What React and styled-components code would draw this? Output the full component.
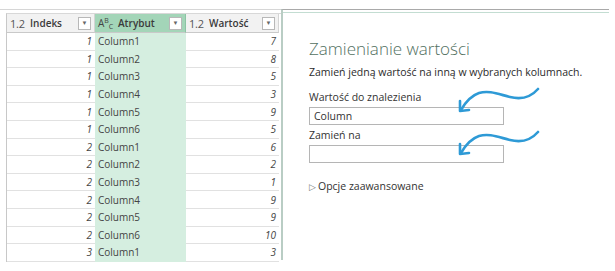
import React from 'react'
import styled, { createGlobalStyle } from 'styled-components'

const GlobalStyle = createGlobalStyle`
  html, body { margin: 0; padding: 0; background: #fff; }
  body { font-family: "Open Sans", "Noto Sans", sans-serif; }
`

const rows = [
  [1, 'Column1', 7], [1, 'Column2', 8], [1, 'Column3', 5], [1, 'Column4', 3],
  [1, 'Column5', 9], [1, 'Column6', 5], [2, 'Column1', 6], [2, 'Column2', 2],
  [2, 'Column3', 1], [2, 'Column4', 9], [2, 'Column5', 9], [2, 'Column6', 10],
  [3, 'Column1', 3],
]

const Page = styled.div`
  position: relative;
  width: 615px;
  height: 271px;
  overflow: hidden;
  display: flex;
  padding-top: 9px;
  box-sizing: border-box;
`

const TableArea = styled.div`
  width: 281px;
  flex: none;
  border-top: 1px solid #d6d6d6;
  padding-top: 3px;
  padding-left: 6px;
  box-sizing: border-box;
`

const Grid = styled.div`
  display: grid;
  grid-template-columns: 88px 91px 93px;
  border-left: 1px solid #c8c8c8;
  border-top: 1px solid #d8d8d8;
`

const HeadCell = styled.div`
  height: 18px;
  display: flex;
  align-items: center;
  padding: 0 3px 0 3px;
  background: ${p => (p.$active ? '#a3d5b8' : '#f2f2f2')};
  border-right: 1px solid ${p => (p.$active ? '#8cc4a4' : '#d4d4d4')};
  border-bottom: 1px solid #c9c9c9;
  font-size: 10px;
  color: #333;
`

const TypeIcon = styled.span`
  font-size: 11px;
  color: #555;
  width: 17px;
  letter-spacing: -0.2px;
`

const AbcIcon = styled.span`
  width: 17px;
  font-size: 10px;
  color: #444;
  line-height: 1;
  display: flex;
  align-items: center;
  sup, sub { font-size: 7px; line-height: 1; }
  sup { margin-top: -6px; }
  sub { margin-top: 6px; }
`

const HeadLabel = styled.span`
  flex: 1;
  font-weight: 600;
  color: #3a3a3a;
  padding-left: 3px;
`

const Drop = styled.span`
  width: 11px;
  height: 11px;
  border: 1px solid #b8b8b8;
  background: #fff;
  display: flex;
  align-items: center;
  justify-content: center;
  font-size: 6px;
  color: #666;
`

const Cell = styled.div`
  height: 17.6px;
  box-sizing: border-box;
  display: flex;
  align-items: center;
  justify-content: ${p => (p.$num ? 'flex-end' : 'flex-start')};
  padding: ${p => (p.$num ? '0 3px 0 0' : '0 0 0 3px')};
  background: ${p => (p.$active ? '#d5eee0' : '#fff')};
  border-bottom: 1px solid ${p => (p.$active ? '#d5eee0' : '#e1e1e1')};
  font-size: 10px;
  font-style: ${p => (p.$num ? 'italic' : 'normal')};
  color: #444;
`

const Panel = styled.div`
  width: 328px;
  flex: none;
  border-top: 1px solid #a9a9a9;
  border-left: 2px solid #b9cdc4;
  height: 251px;
  box-sizing: border-box;
`

const Frame = styled.div`
  margin-top: 2px;
  border-top: 1px solid #c3ddd2;
  padding: 25px 0 0 26px;
  color: #333;
`

const Title = styled.div`
  font-size: 17px;
  font-weight: 300;
  color: #52705f;
  line-height: 22px;
  margin-bottom: 4px;
`

const Desc = styled.div`
  font-size: 10.5px;
  line-height: 16px;
  color: #2b2b2b;
  margin-bottom: 10px;
`

const Label = styled.div`
  font-size: 10.5px;
  line-height: 14px;
  color: #333;
  margin-bottom: 3px;
`

const Input = styled.div`
  width: 195px;
  height: 18px;
  box-sizing: border-box;
  border: 1px solid #b5b5b5;
  font-size: 10.5px;
  display: flex;
  align-items: center;
  padding-left: 4px;
  color: #333;
  margin-bottom: 3px;
`

const Advanced = styled.div`
  margin-top: 16px;
  font-size: 10.5px;
  color: #333;
  display: flex;
  align-items: center;
  gap: 2px;
`

const Tri = styled.span`
  font-size: 9px;
  color: #777;
`

const Arrows = styled.svg`
  position: absolute;
  left: 0;
  top: 0;
  pointer-events: none;
`

function Arrow({ dy }) {
  return (
    <g transform={`translate(0 ${dy})`} stroke="#2e9ad6" strokeWidth="2.6" fill="none" strokeLinecap="round" strokeLinejoin="round">
      <path d="M538 89 C531 97 522 100 510 97 C498 94 489 90 479 93 C470 96 465 103 461 110" />
      <path d="M460 101 L460 111 L469 110" />
    </g>
  )
}

export default function App() {
  return (
    <>
      <GlobalStyle />
      <Page>
        <TableArea>
          <Grid>
            <HeadCell>
              <TypeIcon>1.2</TypeIcon>
              <HeadLabel>Indeks</HeadLabel>
              <Drop>▼</Drop>
            </HeadCell>
            <HeadCell $active>
              <AbcIcon>A<sup>B</sup><sub>C</sub></AbcIcon>
              <HeadLabel>Atrybut</HeadLabel>
              <Drop>▼</Drop>
            </HeadCell>
            <HeadCell>
              <TypeIcon>1.2</TypeIcon>
              <HeadLabel>Wartość</HeadLabel>
              <Drop>▼</Drop>
            </HeadCell>
            {rows.map(([i, a, w], k) => (
              <React.Fragment key={k}>
                <Cell $num>{i}</Cell>
                <Cell $active>{a}</Cell>
                <Cell $num>{w}</Cell>
              </React.Fragment>
            ))}
          </Grid>
        </TableArea>
        <Panel>
          <Frame>
            <Title>Zamienianie wartości</Title>
            <Desc>Zamień jedną wartość na inną w wybranych kolumnach.</Desc>
            <Label>Wartość do znalezienia</Label>
            <Input>Column</Input>
            <Label>Zamień na</Label>
            <Input />
            <Advanced><Tri>▷</Tri>Opcje zaawansowane</Advanced>
          </Frame>
        </Panel>
        <Arrows width="615" height="271" viewBox="0 0 615 271">
          <Arrow dy={0} />
          <Arrow dy={43} />
        </Arrows>
      </Page>
    </>
  )
}
